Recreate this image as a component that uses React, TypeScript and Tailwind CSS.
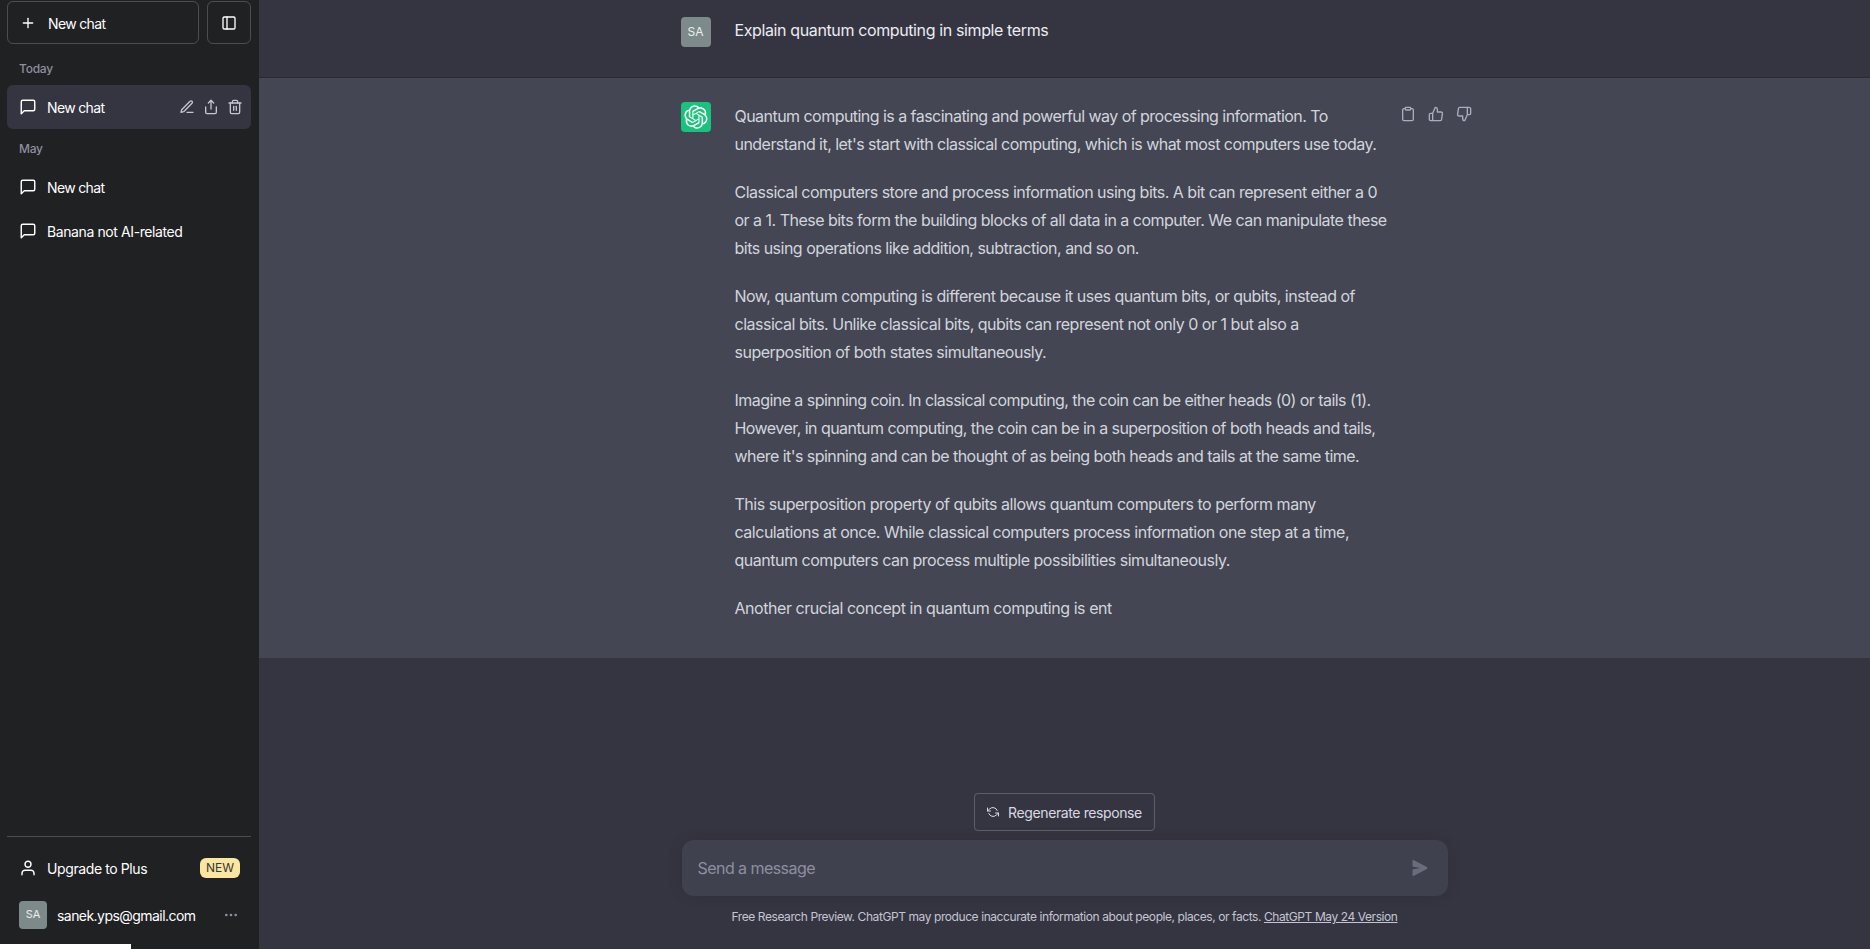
import React from "react";

const Ic = ({ className, children, sw = 2 }: { className?: string; children: React.ReactNode; sw?: number }) => (
  <svg viewBox="0 0 24 24" fill="none" stroke="currentColor" strokeWidth={sw} strokeLinecap="round" strokeLinejoin="round" className={className}>
    {children}
  </svg>
);
const Msg = () => (
  <Ic className="w-[18px] h-[18px] shrink-0" sw={1.9}><path d="M21 15a2 2 0 0 1-2 2H7l-4 4V5a2 2 0 0 1 2-2h14a2 2 0 0 1 2 2z" /></Ic>
);
const Logo = () => (
  <svg viewBox="0 0 41 41" fill="none" className="w-6 h-6">
    <path fill="currentColor" d="M37.5324 16.8707C37.9808 15.5241 38.1363 14.0974 37.9886 12.6859C37.8409 11.2744 37.3934 9.91076 36.676 8.68622C35.6126 6.83404 33.9882 5.3676 32.0373 4.4985C30.0864 3.62941 27.9098 3.40259 25.8215 3.85078C24.8796 2.7893 23.7219 1.94125 22.4257 1.36341C21.1295 0.785575 19.7249 0.491269 18.3058 0.500197C16.1708 0.495044 14.0893 1.16803 12.3614 2.42214C10.6335 3.67624 9.34853 5.44666 8.6917 7.47815C7.30085 7.76286 5.98686 8.3414 4.8377 9.17505C3.68854 10.0087 2.73073 11.0782 2.02839 12.312C0.956464 14.1591 0.498905 16.2988 0.721698 18.4228C0.944492 20.5467 1.83612 22.5449 3.268 24.1293C2.81966 25.4759 2.66413 26.9026 2.81182 28.3141C2.95951 29.7256 3.40701 31.0892 4.12437 32.3138C5.18791 34.1659 6.8123 35.6322 8.76321 36.5013C10.7141 37.3704 12.8907 37.5973 14.9789 37.1492C15.9208 38.2107 17.0786 39.0587 18.3747 39.6366C19.6709 40.2144 21.0755 40.5087 22.4946 40.4998C24.6307 40.5054 26.7133 39.8321 28.4418 38.5772C30.1704 37.3223 31.4556 35.5506 32.1119 33.5179C33.5027 33.2332 34.8167 32.6547 35.9659 31.821C37.115 30.9874 38.0728 29.9178 38.7752 28.684C39.8458 26.8371 40.3023 24.6979 40.0789 22.5748C39.8556 20.4517 38.9639 18.4544 37.5324 16.8707ZM22.4978 37.8849C20.7443 37.8874 19.0459 37.2733 17.6994 36.1501C17.7601 36.117 17.8666 36.0586 17.936 36.0161L25.9004 31.4156C26.1003 31.3019 26.2663 31.137 26.3813 30.9378C26.4964 30.7386 26.5563 30.5124 26.5549 30.2825V19.0542L29.9213 20.998C29.9389 21.0068 29.9541 21.0198 29.9656 21.0359C29.977 21.052 29.9842 21.0707 29.9867 21.0902V30.3889C29.9842 32.375 29.1946 34.2791 27.7909 35.6841C26.3872 37.0892 24.4838 37.8806 22.4978 37.8849ZM6.39227 31.0064C5.51397 29.4888 5.19742 27.7107 5.49804 25.9832C5.55718 26.0187 5.66048 26.0818 5.73461 26.1244L13.699 30.7248C13.8975 30.8408 14.1233 30.902 14.3532 30.902C14.583 30.902 14.8088 30.8408 15.0073 30.7248L24.731 25.1103V28.9979C24.7321 29.0177 24.7283 29.0376 24.7199 29.0556C24.7115 29.0736 24.6988 29.0893 24.6829 29.1012L16.6317 33.7497C14.9096 34.7416 12.8643 35.0097 10.9447 34.4954C9.02506 33.9811 7.38785 32.7263 6.39227 31.0064ZM4.29707 13.6194C5.17156 12.0998 6.55279 10.9364 8.19885 10.3327C8.19885 10.4013 8.19491 10.5228 8.19491 10.6071V19.808C8.19351 20.0378 8.25334 20.2638 8.36823 20.4629C8.48312 20.6619 8.64893 20.8267 8.84863 20.9404L18.5723 26.5542L15.206 28.4979C15.1894 28.5089 15.1703 28.5155 15.1505 28.5173C15.1307 28.5191 15.1107 28.516 15.0924 28.5082L7.04046 23.8557C5.32135 22.8601 4.06716 21.2235 3.55289 19.3046C3.03862 17.3858 3.30624 15.3413 4.29707 13.6194ZM31.955 20.0556L22.2312 14.4411L25.5976 12.4981C25.6142 12.4872 25.6333 12.4805 25.6531 12.4787C25.6729 12.4769 25.6928 12.4801 25.7111 12.4879L33.7631 17.1364C34.9967 17.849 36.0017 18.8982 36.6606 20.1613C37.3194 21.4244 37.6047 22.849 37.4832 24.2684C37.3617 25.6878 36.8382 27.0432 35.9743 28.1759C35.1103 29.3086 33.9415 30.1717 32.6047 30.6641C32.6047 30.5947 32.6047 30.4733 32.6047 30.3889V21.188C32.6066 20.9586 32.5474 20.7328 32.4332 20.5338C32.319 20.3348 32.154 20.1698 31.955 20.0556ZM35.3055 15.0128C35.2464 14.9765 35.1431 14.9142 35.069 14.8717L27.1045 10.2712C26.906 10.1554 26.6803 10.0943 26.4504 10.0943C26.2206 10.0943 25.9948 10.1554 25.7963 10.2712L16.0726 15.8858V11.9982C16.0715 11.9783 16.0753 11.9585 16.0837 11.9405C16.0921 11.9225 16.1048 11.9068 16.1207 11.8949L24.1719 7.25025C25.4053 6.53903 26.8158 6.19376 28.2383 6.25482C29.6608 6.31589 31.0364 6.78077 32.2044 7.59508C33.3723 8.40939 34.2842 9.53945 34.8334 10.8531C35.3826 12.1667 35.5464 13.6095 35.3055 15.0128ZM14.2424 21.9419L10.8752 19.9981C10.8576 19.9893 10.8423 19.9763 10.8309 19.9602C10.8195 19.9441 10.8122 19.9254 10.8098 19.9058V10.6071C10.8107 9.18295 11.2173 7.78848 11.9819 6.58696C12.7466 5.38544 13.8377 4.42659 15.1275 3.82264C16.4173 3.21869 17.8524 2.99464 19.2649 3.1767C20.6775 3.35876 22.0089 3.93941 23.1034 4.85067C23.0427 4.88379 22.937 4.94215 22.8668 4.98473L14.9024 9.58517C14.7025 9.69878 14.5366 9.86356 14.4215 10.0626C14.3065 10.2616 14.2466 10.4877 14.2479 10.7175L14.2424 21.9419ZM16.071 17.9991L20.4018 15.4978L24.7325 17.9975V22.9985L20.4018 25.4983L16.071 22.9985V17.9991Z" />
  </svg>
);

const paragraphs: { cls: string; lines: string[] }[] = [
  { cls: "tracking-[-0.54px]", lines: ["Quantum computing is a fascinating and powerful way of processing information. To", "understand it, let's start with classical computing, which is what most computers use today."] },
  { cls: "tracking-[-0.51px]", lines: ["Classical computers store and process information using bits. A bit can represent either a 0", "or a 1. These bits form the building blocks of all data in a computer. We can manipulate these", "bits using operations like addition, subtraction, and so on."] },
  { cls: "tracking-[-0.5px]", lines: ["Now, quantum computing is different because it uses quantum bits, or qubits, instead of", "classical bits. Unlike classical bits, qubits can represent not only 0 or 1 but also a", "superposition of both states simultaneously."] },
  { cls: "tracking-[-0.55px]", lines: ["Imagine a spinning coin. In classical computing, the coin can be either heads (0) or tails (1).", "However, in quantum computing, the coin can be in a superposition of both heads and tails,", "where it's spinning and can be thought of as being both heads and tails at the same time."] },
  { cls: "tracking-[-0.48px]", lines: ["This superposition property of qubits allows quantum computers to perform many", "calculations at once. While classical computers process information one step at a time,", "quantum computers can process multiple possibilities simultaneously."] },
  { cls: "tracking-[-0.45px]", lines: ["Another crucial concept in quantum computing is ent"] },
];

export default function App() {
  return (
    <div className="relative flex h-screen overflow-hidden bg-[#343541] font-['Inter',sans-serif] text-[#ececf1]">
      <aside className="flex w-[259px] shrink-0 flex-col bg-[#202123] pl-[7px] pr-[8px] pt-[1px] text-sm text-white">
        <div className="flex gap-2">
          <div className="flex h-[43px] flex-1 items-center gap-3 rounded-md border border-white/20 px-3">
            <Ic className="h-4 w-4 shrink-0"><line x1="12" y1="5" x2="12" y2="19" /><line x1="5" y1="12" x2="19" y2="12" /></Ic>
            <span className="pt-[2px] tracking-[-0.65px]">New chat</span>
          </div>
          <div className="flex h-[43px] w-[44px] items-center justify-center rounded-md border border-white/20">
            <Ic className="h-4 w-4"><rect x="3" y="3" width="18" height="18" rx="2" /><line x1="9" y1="3" x2="9" y2="21" /></Ic>
          </div>
        </div>
        <div className="flex h-[41px] items-end px-3 pb-[8px] text-xs font-medium text-[#8e8ea0] tracking-[-0.25px]">Today</div>
        <div className="flex h-[44px] items-center gap-[10px] rounded-md bg-[#343541] pl-3 pr-[8px]">
          <Msg />
          <span className="flex-1 pt-[2px] tracking-[-0.65px]">New chat</span>
          <div className="flex items-center gap-2 text-[#c5c5d2]">
            <Ic className="h-4 w-4"><path d="M12 20h9" /><path d="M16.5 3.5a2.121 2.121 0 0 1 3 3L7 19l-4 1 1-4L16.5 3.5z" /></Ic>
            <Ic className="h-4 w-4"><path d="M4 12v8a2 2 0 0 0 2 2h12a2 2 0 0 0 2-2v-8" /><polyline points="16 6 12 2 8 6" /><line x1="12" y1="2" x2="12" y2="15" /></Ic>
            <Ic className="h-4 w-4"><polyline points="3 6 5 6 21 6" /><path d="M19 6v14a2 2 0 0 1-2 2H7a2 2 0 0 1-2-2V6m3 0V4a2 2 0 0 1 2-2h4a2 2 0 0 1 2 2v2" /><line x1="10" y1="11" x2="10" y2="17" /><line x1="14" y1="11" x2="14" y2="17" /></Ic>
          </div>
        </div>
        <div className="flex h-[36px] items-end px-3 pb-[8px] text-xs font-medium text-[#8e8ea0] tracking-[-0.25px]">May</div>
        <div className="flex h-[44px] items-center gap-[10px] px-3"><Msg /><span className="pt-[2px] tracking-[-0.65px]">New chat</span></div>
        <div className="flex h-[44px] items-center gap-[10px] px-3"><Msg /><span className="pt-[2px] tracking-[-0.4px]">Banana not AI-related</span></div>
        <div className="mt-auto border-t border-white/20 pt-[9px] pb-[9px]">
          <div className="flex h-[44px] items-center gap-[10px] pl-3 pr-[11px]">
            <Ic className="h-[18px] w-[18px] shrink-0" sw={1.9}><path d="M20 21v-2a4 4 0 0 0-4-4H8a4 4 0 0 0-4 4v2" /><circle cx="12" cy="7" r="4" /></Ic>
            <span className="flex-1 pt-[2px] tracking-[-0.4px]">Upgrade to Plus</span>
            <span className="rounded-md bg-[#fae69e] px-[6px] py-[2px] text-xs text-[#343541] leading-4">NEW</span>
          </div>
          <div className="flex h-[50px] items-center gap-[10px] px-3">
            <div className="flex h-7 w-7 items-center justify-center rounded-sm bg-[#7d8a8a] text-[11px] text-white/85">SA</div>
            <span className="flex-1 pt-[2px] tracking-[-0.55px]">sanek.yps@gmail.com</span>
            <Ic className="h-4 w-4 text-[#8e8ea0]"><circle cx="12" cy="12" r="1" /><circle cx="19" cy="12" r="1" /><circle cx="5" cy="12" r="1" /></Ic>
          </div>
        </div>
      </aside>

      <main className="flex min-w-0 flex-1 flex-col">
        <section className="h-[78px] shrink-0 border-b border-[#202123]/50 bg-[#343541]">
          <div className="mx-auto flex w-[768px] gap-6 pt-[17px]">
            <div className="flex h-[30px] w-[30px] shrink-0 items-center justify-center rounded-sm bg-[#7d8a8a] text-xs text-white/85">SA</div>
            <p className="-mt-[1px] text-base leading-7 tracking-[-0.38px] text-[#ececf1]">Explain quantum computing in simple terms</p>
          </div>
        </section>
        <section className="shrink-0 bg-[#444654] pt-6 pb-9">
          <div className="relative mx-auto flex w-[768px] gap-6">
            <div className="flex h-[30px] w-[30px] shrink-0 items-center justify-center rounded-sm bg-[#19c37d] text-white"><Logo /></div>
            <div className="flex flex-col gap-5 text-base leading-7 whitespace-nowrap text-[#d1d5db]">
              {paragraphs.map((p, i) => (
                <p key={i} className={p.cls}>
                  {p.lines.map((l, j) => (
                    <React.Fragment key={j}>{l}{j < p.lines.length - 1 && <br />}</React.Fragment>
                  ))}
                </p>
              ))}
            </div>
            <div className="absolute top-0 left-[719px] flex gap-3 pt-[4px] text-[#acacbe]">
              <Ic className="h-4 w-4"><path d="M16 4h2a2 2 0 0 1 2 2v14a2 2 0 0 1-2 2H6a2 2 0 0 1-2-2V6a2 2 0 0 1 2-2h2" /><rect x="8" y="2" width="8" height="4" rx="1" /></Ic>
              <Ic className="h-4 w-4"><path d="M14 9V5a3 3 0 0 0-3-3l-4 9v11h11.28a2 2 0 0 0 2-1.7l1.38-9a2 2 0 0 0-2-2.3zM7 22H4a2 2 0 0 1-2-2v-7a2 2 0 0 1 2-2h3" /></Ic>
              <Ic className="h-4 w-4"><path d="M10 15v4a3 3 0 0 0 3 3l4-9V2H5.72a2 2 0 0 0-2 1.7l-1.38 9a2 2 0 0 0 2 2.3zm7-13h2.67A2.31 2.31 0 0 1 22 4v7a2.31 2.31 0 0 1-2.33 2H17" /></Ic>
            </div>
          </div>
        </section>
        <div className="flex-1" />
        <div className="mx-auto flex w-[768px] flex-col items-center">
          <div className="flex h-[38px] items-center gap-[9px] rounded-[4px] border border-white/20 px-3 text-sm tracking-[-0.39px] text-[#d9d9e3]">
            <Ic className="h-3 w-3 shrink-0"><polyline points="1 4 1 10 7 10" /><polyline points="23 20 23 14 17 14" /><path d="M20.49 9A9 9 0 0 0 5.64 5.64L1 10m22 4l-4.64 4.36A9 9 0 0 1 3.51 15" /></Ic>
            <span className="pt-[2px]">Regenerate response</span>
          </div>
          <div className="mt-[9px] flex h-[56px] w-[766px] items-center justify-between rounded-xl bg-[#40414f] pl-4 pr-[20px] shadow-[0_0_15px_rgba(0,0,0,0.1)]">
            <span className="text-base tracking-[-0.55px] text-[#8e8ea0]">Send a message</span>
            <svg viewBox="0 0 16 16" fill="currentColor" className="h-4 w-4 text-[#6b6c7b]">
              <path d="M.5 1.163A1 1 0 0 1 1.97.28l12.868 6.837a1 1 0 0 1 0 1.766L1.969 15.72A1 1 0 0 1 .5 14.836V10.33a1 1 0 0 1 .816-.983L8.5 8 1.316 6.653A1 1 0 0 1 .5 5.67V1.163Z" />
            </svg>
          </div>
          <div className="flex h-[53px] items-start pt-[13px] text-xs leading-4 tracking-[-0.42px] whitespace-nowrap text-[#c5c5d2]">
            <span>Free Research Preview. ChatGPT may produce inaccurate information about people, places, or facts.&nbsp;<span className="underline">ChatGPT May 24 Version</span></span>
          </div>
        </div>
      </main>
      <div className="absolute bottom-0 left-0 h-[5px] w-[131px] bg-white" />
    </div>
  );
}
